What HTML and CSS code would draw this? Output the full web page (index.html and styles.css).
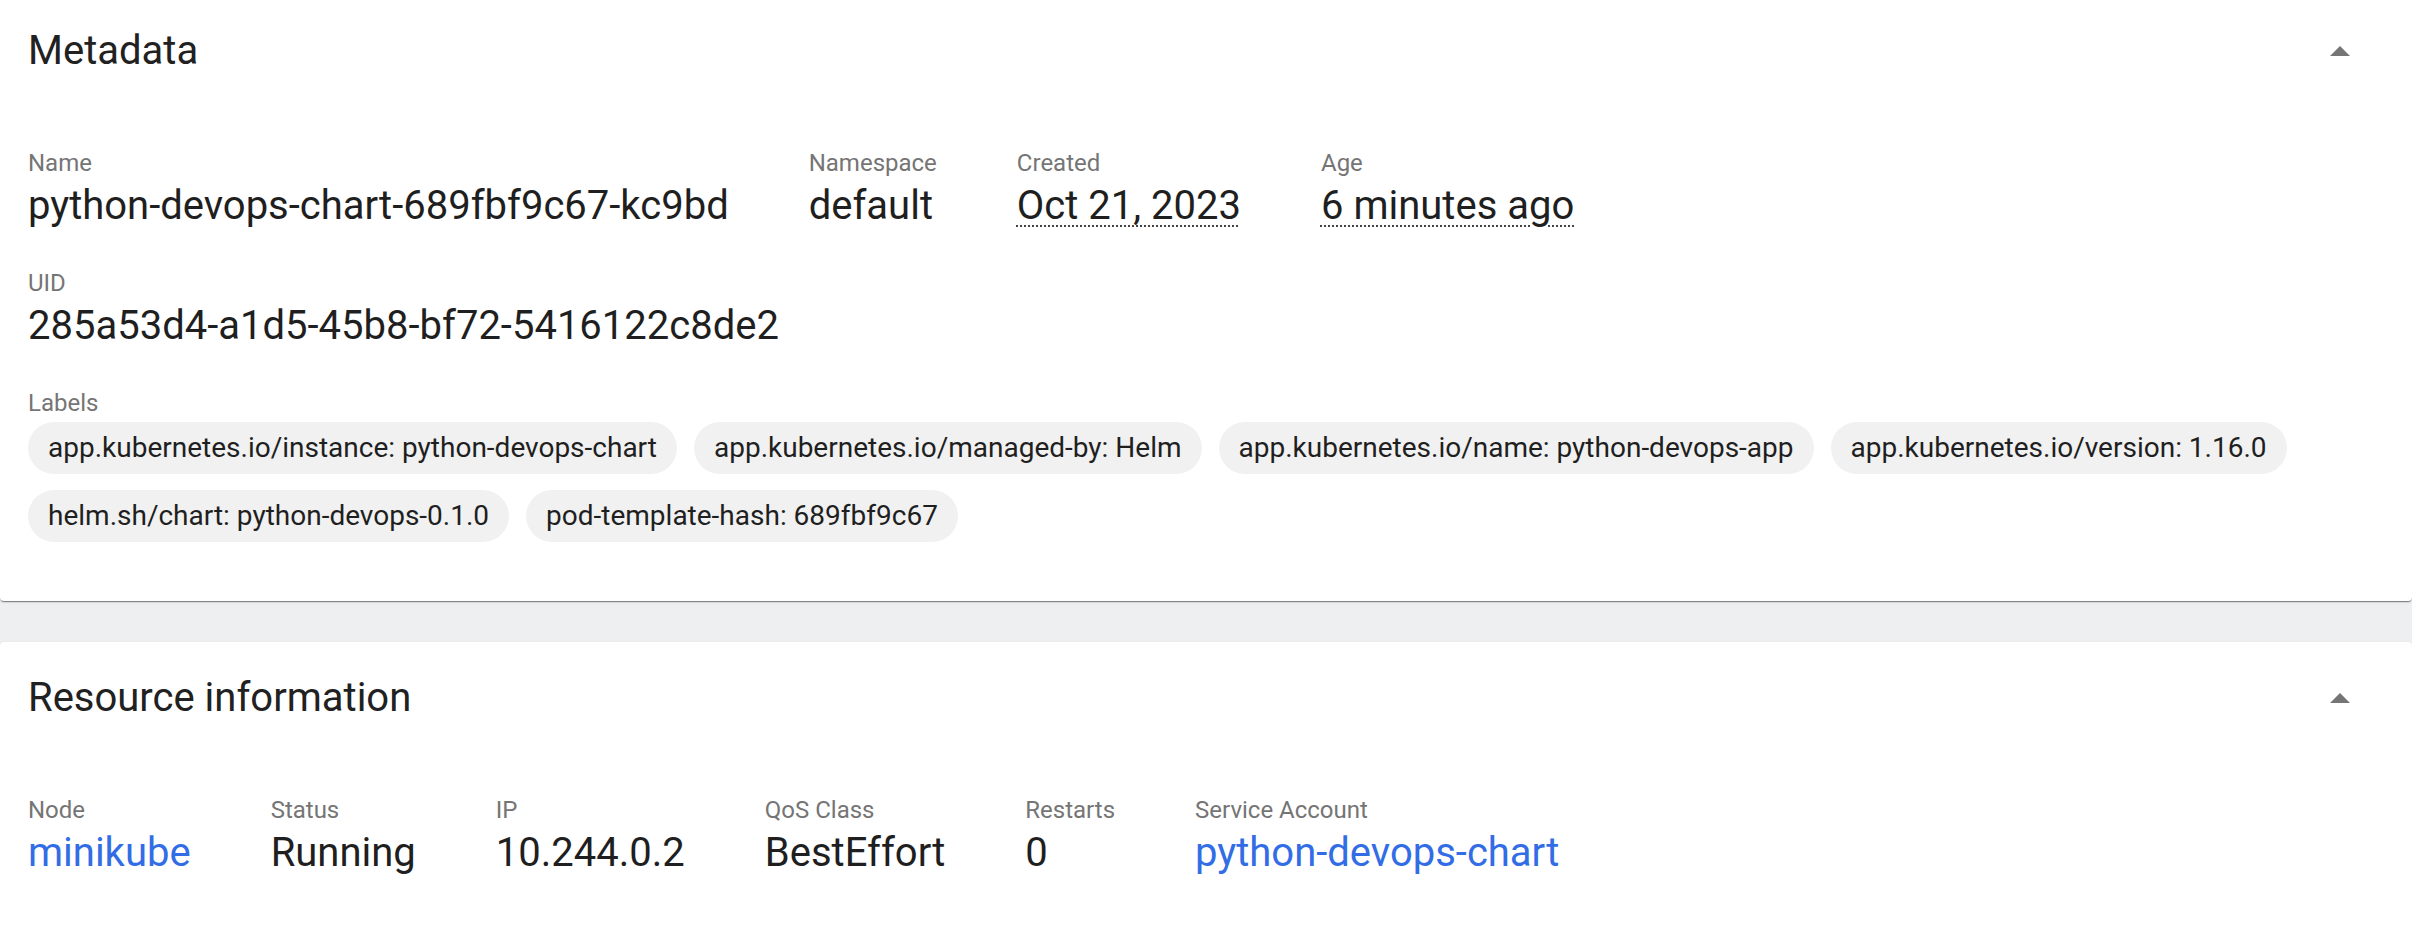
FILE: index.html
```html
<!DOCTYPE html>
<html lang="en">
<head>
<meta charset="utf-8">
<title>Pod details</title>
<link rel="stylesheet" href="styles.css">
</head>
<body>
<div class="page">
  <section class="card card-metadata">
    <header class="card-header">
      <h2 class="card-title">Metadata</h2>
      <svg class="toggle" width="20" height="10" viewBox="0 0 20 10" aria-hidden="true"><polygon points="0,10 10,0 20,10" fill="#757575"/></svg>
    </header>
    <div class="card-body">
      <div class="prop-row">
        <div class="prop"><div class="prop-label">Name</div><div class="prop-value">python-devops-chart-689fbf9c67-kc9bd</div></div>
        <div class="prop"><div class="prop-label">Namespace</div><div class="prop-value">default</div></div>
        <div class="prop"><div class="prop-label">Created</div><div class="prop-value"><span class="dotted">Oct 21, 2023</span></div></div>
        <div class="prop"><div class="prop-label">Age</div><div class="prop-value"><span class="dotted">6 minutes ago</span></div></div>
      </div>
      <div class="prop-row">
        <div class="prop"><div class="prop-label">UID</div><div class="prop-value">285a53d4-a1d5-45b8-bf72-5416122c8de2</div></div>
      </div>
      <div class="prop-row">
        <div class="prop prop-wide">
          <div class="prop-label">Labels</div>
          <div class="chips">
            <span class="chip">app.kubernetes.io/instance: python-devops-chart</span>
            <span class="chip">app.kubernetes.io/managed-by: Helm</span>
            <span class="chip">app.kubernetes.io/name: python-devops-app</span>
            <span class="chip">app.kubernetes.io/version: 1.16.0</span>
            <span class="chip">helm.sh/chart: python-devops-0.1.0</span>
            <span class="chip">pod-template-hash: 689fbf9c67</span>
          </div>
        </div>
      </div>
    </div>
  </section>

  <section class="card card-resource">
    <header class="card-header">
      <h2 class="card-title">Resource information</h2>
      <svg class="toggle" width="20" height="10" viewBox="0 0 20 10" aria-hidden="true"><polygon points="0,10 10,0 20,10" fill="#757575"/></svg>
    </header>
    <div class="card-body">
      <div class="prop-row">
        <div class="prop"><div class="prop-label">Node</div><div class="prop-value"><a class="link" href="#">minikube</a></div></div>
        <div class="prop"><div class="prop-label">Status</div><div class="prop-value">Running</div></div>
        <div class="prop"><div class="prop-label">IP</div><div class="prop-value">10.244.0.2</div></div>
        <div class="prop"><div class="prop-label">QoS Class</div><div class="prop-value">BestEffort</div></div>
        <div class="prop"><div class="prop-label">Restarts</div><div class="prop-value">0</div></div>
        <div class="prop"><div class="prop-label">Service Account</div><div class="prop-value"><a class="link" href="#">python-devops-chart</a></div></div>
      </div>
    </div>
  </section>
</div>
</body>
</html>
```

FILE: styles.css
```css
html, body {
  margin: 0;
  padding: 0;
}

body {
  background: #eeeff1;
  font-family: Roboto, "Liberation Sans", Arial, sans-serif;
  color: #212121;
  overflow: hidden;
}

.page {
  display: flex;
  flex-direction: column;
  gap: 41px;
  margin-top: -5px;
}

.card {
  background: #ffffff;
  border-radius: 4px;
  box-shadow: 0 2px 1px -1px rgba(0, 0, 0, 0.35), 0 1px 1px 0 rgba(0, 0, 0, 0.14), 0 1px 3px 0 rgba(0, 0, 0, 0.12);
}

.card-header {
  height: 112px;
  display: flex;
  align-items: center;
  justify-content: space-between;
  padding: 0 62px 0 28px;
}

.card-title {
  margin: 0;
  font-size: 40px;
  font-weight: 400;
  line-height: 50px;
  color: #212121;
}

.toggle {
  display: block;
  flex: none;
}

.card-body {
  padding: 38px 28px 59px;
}

.card-resource .card-body {
  padding-bottom: 120px;
}

.prop-row {
  display: flex;
  flex-wrap: wrap;
  column-gap: 80px;
}

.prop-row + .prop-row {
  margin-top: 34px;
}

.prop-wide {
  flex: 1 1 auto;
}

.prop-label {
  font-size: 24px;
  line-height: 36px;
  color: #757575;
}

.prop-value {
  font-size: 40px;
  line-height: 50px;
  color: #1f1f1f;
  white-space: nowrap;
}

.dotted {
  text-decoration: underline dotted #444444;
  text-decoration-thickness: 2px;
  text-underline-offset: 6px;
}

.link {
  color: #326de6;
  text-decoration: none;
}

.chips {
  display: flex;
  flex-wrap: wrap;
  gap: 16px 17px;
  margin-top: 1px;
}

.chip {
  display: inline-block;
  background: #f1f1f1;
  border-radius: 26px;
  padding: 8px 20px;
  font-size: 28px;
  line-height: 36px;
  color: #1f1f1f;
  white-space: nowrap;
}
```
